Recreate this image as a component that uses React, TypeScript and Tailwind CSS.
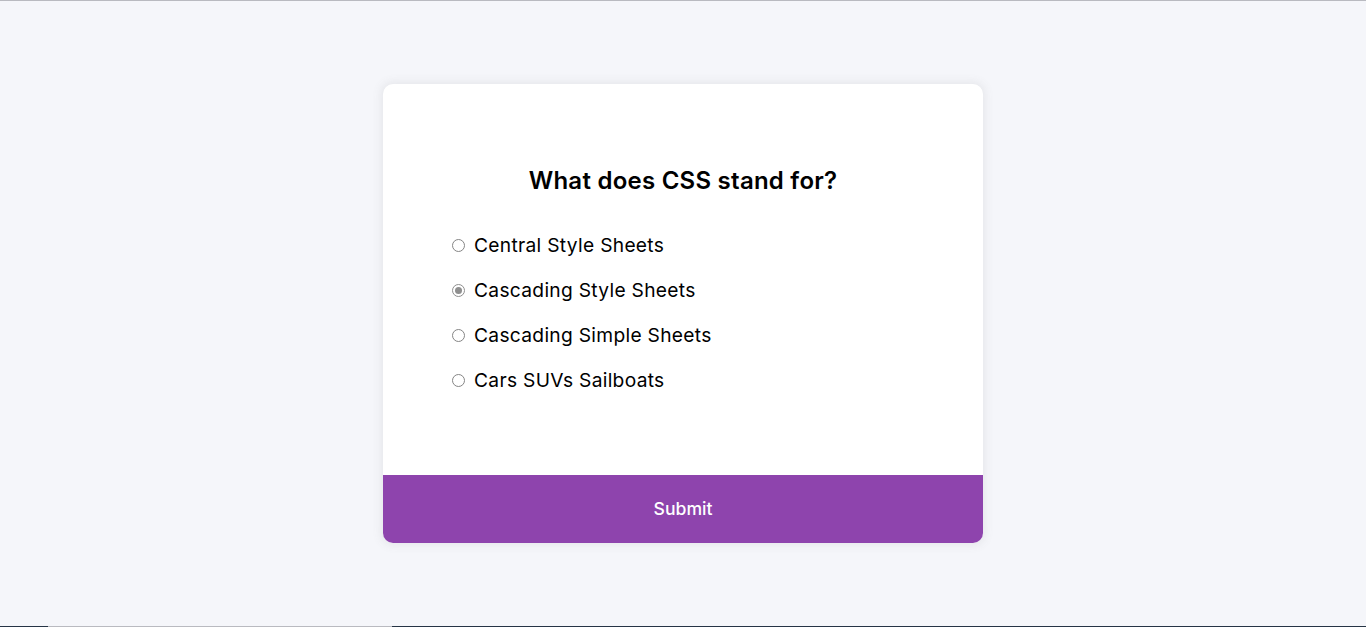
const options = [
  { id: "a", text: "Central Style Sheets" },
  { id: "b", text: "Cascading Style Sheets" },
  { id: "c", text: "Cascading Simple Sheets" },
  { id: "d", text: "Cars SUVs Sailboats" },
]

function Radio({ checked }: { checked: boolean }) {
  return (
    <span
      className={
        "flex h-[13px] w-[13px] items-center justify-center rounded-full border bg-white " +
        (checked ? "border-[#8f8f8f]" : "border-[#858585]")
      }
    >
      {checked && <span className="h-[7px] w-[7px] rounded-full bg-[#8f8f8f]" />}
    </span>
  )
}

function Quiz() {
  const selected = "b"
  return (
    <div className="w-[600px] overflow-hidden rounded-[10px] bg-white shadow-[0_0_10px_2px_rgba(100,100,100,0.1)]">
      <div className="p-16">
        <h2 className="pt-[15px] pb-4 text-center text-[24px] leading-[36px] font-semibold tracking-[0.25px] text-black">
          What does CSS stand for?
        </h2>
        <ul>
          {options.map((o) => (
            <li
              key={o.id}
              className="my-4 flex items-center text-[19.2px] leading-[29px] tracking-[0.3px] text-black"
            >
              <span className="ml-[5px] mr-[9px]">
                <Radio checked={o.id === selected} />
              </span>
              <label>{o.text}</label>
            </li>
          ))}
        </ul>
      </div>
      <button className="block h-[68px] w-full bg-[#8e44ad] text-[17.6px] font-medium text-white">
        Submit
      </button>
    </div>
  )
}

export default function App() {
  return (
    <div
      className="flex h-screen flex-col bg-[#f5f6fa]"
      style={{ fontFamily: "Inter, 'Noto Sans', sans-serif" }}
    >
      <div className="h-px bg-[#b9bac0]" />
      <main className="flex flex-1 items-start justify-center pt-[83px]">
        <Quiz />
      </main>
      <div className="flex h-px">
        <div className="w-[48px] bg-[#263445]" />
        <div className="w-[344px] bg-[#b9bac0]" />
        <div className="flex-1 bg-[#263445]" />
      </div>
    </div>
  )
}
